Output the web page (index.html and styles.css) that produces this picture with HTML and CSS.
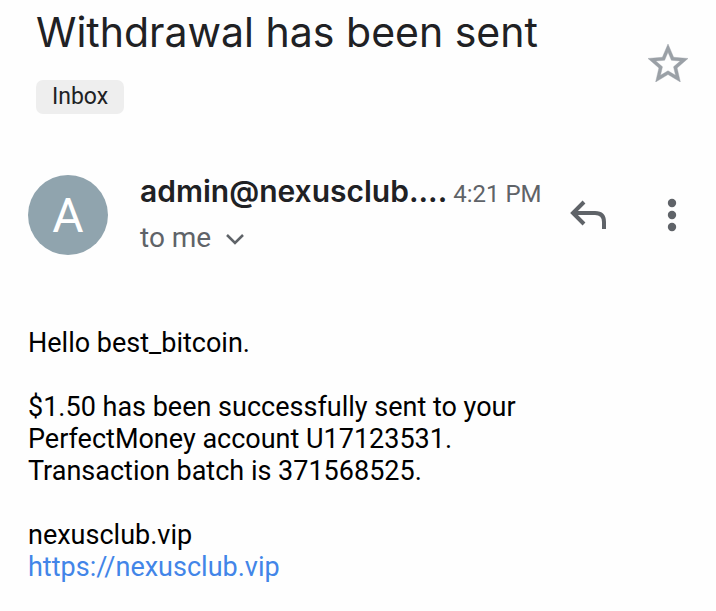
FILE: index.html
```html
<!DOCTYPE html>
<html lang="en">
<head>
    <meta charset="UTF-8">
    <meta name="viewport" content="width=device-width, initial-scale=1.0">
    <title>Withdrawal has been sent</title>
    <link rel="stylesheet" href="styles.css">
</head>
<body>
    <main class="mail">
        <header class="subject">
            <div class="subject-text">
                <h1>Withdrawal has been sent</h1>
                <button class="label" type="button">Inbox</button>
            </div>
            <button class="icon-btn star" type="button" aria-label="Star">
                <svg width="40" height="38" viewBox="2 2 20 19">
                    <path d="M22 9.240l-7.190-.62L12 2 9.190 8.630 2 9.240l5.460 4.730L5.820 21 12 17.270 18.180 21l-1.630-7.030L22 9.240zM12 15.400l-3.760 2.270 1-4.280-3.320-2.880 4.380-.38L12 6.100l1.710 4.040 4.380.38-3.320 2.880 1 4.280L12 15.400z" fill="#9aa0a6" stroke="#9aa0a6" stroke-width=".2"/>
                </svg>
            </button>
        </header>

        <section class="sender">
            <div class="avatar">A</div>
            <div class="sender-info">
                <div class="sender-line">
                    <span class="name">admin@nexusclub....</span>
                    <time class="time">4:21 PM</time>
                </div>
                <button class="recipient" type="button">
                    to me
                    <svg width="20" height="14" viewBox="0 0 20 14">
                        <path d="M2 4l8 8 8-8" fill="none" stroke="#5f6368" stroke-width="2.500"/>
                    </svg>
                </button>
            </div>
            <div class="actions">
                <button class="icon-btn" type="button" aria-label="Reply">
                    <svg width="38" height="30" viewBox="0 0 38 30">
                        <path d="M14 2L3 13l11 11M3 13h22q9 0 9 9v7" fill="none" stroke="#5f6368" stroke-width="4"/>
                    </svg>
                </button>
                <button class="icon-btn" type="button" aria-label="More options">
                    <svg width="10" height="34" viewBox="0 0 10 34">
                        <g fill="#5f6368">
                            <circle cx="5" cy="5" r="4.200"/>
                            <circle cx="5" cy="17" r="4.200"/>
                            <circle cx="5" cy="29" r="4.200"/>
                        </g>
                    </svg>
                </button>
            </div>
        </section>

        <article class="message">
            <p>Hello best_bitcoin.</p>
            <p>$1.50 has been successfully sent to your<br>
            PerfectMoney account U17123531.<br>
            Transaction batch is 371568525.</p>
            <p>nexusclub.vip<br>
            <a href="https://nexusclub.vip">https://nexusclub.vip</a></p>
        </article>
    </main>
</body>
</html>
```
FILE: styles.css
```css
body{
    margin: 0;
    background: #fefefe;
    color: #202124;
    font-family: Roboto, Arial, sans-serif;
}
button{
    border: none;
    background: none;
    padding: 0;
    font-family: inherit;
    color: inherit;
    cursor: pointer;
}
svg{
    display: block;
}
.mail{
    padding: 6px 28px;
}
.subject{
    display: flex;
    justify-content: space-between;
    align-items: center;
    padding-left: 8px;
}
.star{
    padding-top: 6px;
}
h1{
    margin: 0 0 22px;
    font-family: Inter, sans-serif;
    font-size: 41px;
    line-height: 52px;
    font-weight: 400;
}
.label{
    display: block;
    background: #eeeeee;
    border-radius: 7px;
    padding: 0 16px;
    font-size: 23px;
    line-height: 34px;
}
.sender{
    display: flex;
    align-items: center;
    margin-top: 57px;
}
.avatar{
    width: 80px;
    height: 80px;
    border-radius: 50%;
    background: #90a4ae;
    color: white;
    font-size: 48px;
    line-height: 82px;
    text-align: center;
    flex: none;
}
.sender-info{
    display: flex;
    flex-direction: column;
    gap: 4px;
    margin-left: 32px;
}
.sender-line{
    display: flex;
    align-items: baseline;
    gap: 6px;
    line-height: 40px;
}
.name{
    font-family: Inter, sans-serif;
    font-size: 30px;
    font-weight: 600;
}
.time{
    font-size: 24px;
    color: #5f6368;
}
.recipient{
    display: flex;
    align-items: center;
    gap: 14px;
    font-size: 28px;
    line-height: 40px;
    color: #5f6368;
}
.actions{
    display: flex;
    align-items: center;
    gap: 59px;
    margin-left: auto;
    margin-right: 11px;
}
.message{
    margin-top: 69px;
    font-size: 27px;
    line-height: 32px;
    color: black;
}
.message p{
    margin: 0 0 32px;
}
.message a{
    color: #4285e8;
    text-decoration: none;
}
```
